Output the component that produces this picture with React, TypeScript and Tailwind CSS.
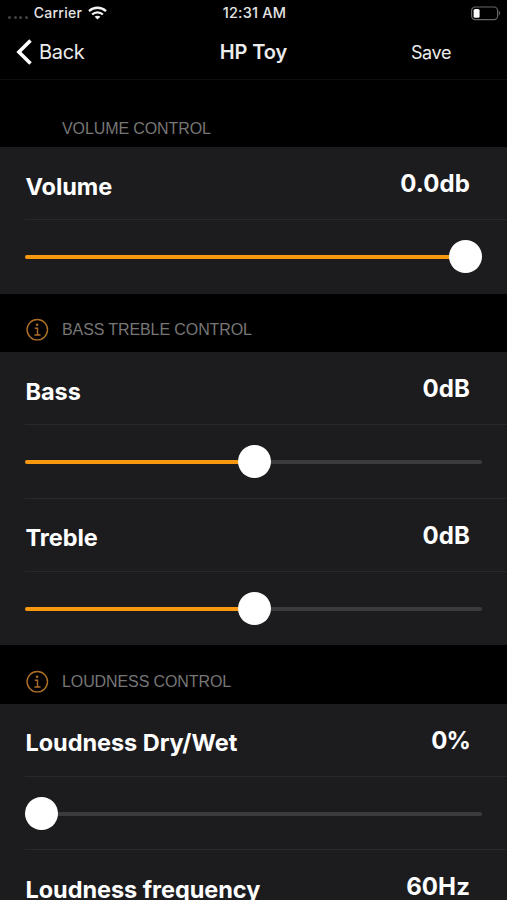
import clsx from 'clsx';

type Param = {
    label: string;
    value: string;
    position: number;
    valueClass?: string;
};

type Section = {
    title: string;
    info: boolean;
    params: Param[];
};

const SECTIONS: Section[] = [
    {
        title: 'Volume control',
        info: false,
        params: [{ label: 'Volume', value: '0.0db', position: 1 }],
    },
    {
        title: 'Bass treble control',
        info: true,
        params: [
            { label: 'Bass', value: '0dB', position: 0.502 },
            { label: 'Treble', value: '0dB', position: 0.502 },
        ],
    },
    {
        title: 'Loudness control',
        info: true,
        params: [
            { label: 'Loudness Dry/Wet', value: '0%', position: 0, valueClass: 'tracking-[-0.9px]' },
            { label: 'Loudness frequency', value: '60Hz', position: 0.2 },
        ],
    },
];

const TRACK_WIDTH = 457;
const THUMB_SIZE = 33;

function StatusBar() {
    return (
        <div className="grid h-[26px] shrink-0 grid-cols-3 items-center pl-2 pr-[6px] text-[14px] leading-none font-medium text-[#e4e4e4]">
            <div className="flex items-center">
                <div className="mt-[9px] flex gap-[2.6px]">
                    {[0, 1, 2, 3].map((dot) => (
                        <span key={dot} className="size-[3px] rounded-full bg-[#444]" />
                    ))}
                </div>
                <span className="ml-[6px] tracking-[0.25px]">Carrier</span>
                <svg className="ml-[6px]" width="19" height="14" viewBox="0 0 19 14" fill="none" stroke="#f2f2f2" strokeWidth="2.3">
                    <path d="M1 5.1C5.7.6 13.3.6 18 5.1" />
                    <path d="M4.1 8.5c3-2.9 7.8-2.9 10.8 0" />
                    <path d="M9.5 13.6 6.6 10.8c1.6-1.5 4.2-1.5 5.8 0z" fill="#f2f2f2" stroke="none" />
                </svg>
            </div>
            <div className="text-center text-[14.5px] tracking-[0.2px] whitespace-nowrap">12:31 AM</div>
            <svg className="justify-self-end" width="31" height="15" viewBox="0 0 31 15" fill="none">
                <rect x="1.6" y="1" width="26" height="12.6" rx="3.6" stroke="#666" strokeWidth="1.2" />
                <rect x="3.6" y="3" width="6" height="8.8" rx="1.6" fill="#fff" />
                <path d="M28.9 5.1c1.5.5 1.5 3.9 0 4.4z" fill="#666" />
            </svg>
        </div>
    );
}

function NavBar() {
    return (
        <header className="grid h-[54px] shrink-0 grid-cols-3 items-center border-b border-[#0e0e0e] pl-4 text-[20px] text-[#ececec]">
            <button className="flex items-center">
                <svg className="-mt-px" width="17" height="28" viewBox="0 0 17 28" fill="none" stroke="#fff" strokeWidth="3.6">
                    <path d="M14.5 2.4 2.9 14l11.6 11.6" />
                </svg>
                <span className="-mt-px ml-[6px] tracking-[-0.3px]">Back</span>
            </button>
            <h1 className="-mt-px -ml-4 text-center font-semibold tracking-[-0.1px]">HP Toy</h1>
            <button className="pr-[56px] text-right text-[18px] tracking-[-0.4px]">Save</button>
        </header>
    );
}

function InfoIcon() {
    return (
        <svg width="24" height="24" viewBox="0 0 24 24" fill="none" stroke="#ad6f27" strokeWidth="1.4">
            <circle cx="12.3" cy="11.7" r="10.2" />
            <circle cx="12.1" cy="6.7" r="1.3" fill="#ad6f27" stroke="none" />
            <path d="M9.8 10.2h2.7v6.7M9.5 17h6" />
        </svg>
    );
}

function SectionHeader({ title, info, first }: { title: string; info: boolean; first: boolean }) {
    return (
        <div className={clsx('flex shrink-0 items-end pl-[25px]', first ? 'h-[67px] pb-[6px]' : 'h-[58.4px] pb-[10px]')}>
            <div className="h-6 w-[37px]">{info && <InfoIcon />}</div>
            <h2 className="font-['Liberation_Sans',Arial,sans-serif] text-[16px] leading-6 tracking-[-0.1px] text-[#767676] uppercase">
                {title}
            </h2>
        </div>
    );
}

function Slider({ position }: { position: number }) {
    const thumbLeft = position * (TRACK_WIDTH - THUMB_SIZE);

    return (
        <div className="relative flex h-[33px] w-[457px] items-center">
            <div className="mt-px h-1 w-full overflow-hidden rounded-full bg-[#3b3b3d]">
                <div className="h-full bg-[#f7980f]" style={{ width: thumbLeft + THUMB_SIZE / 2 }} />
            </div>
            <div className="absolute top-0 size-[33px] rounded-full bg-white" style={{ left: thumbLeft }} />
        </div>
    );
}

function ParamRows({ label, value, position, valueClass, last }: Param & { last: boolean }) {
    return (
        <>
            <div className="flex h-[73.3px] shrink-0 flex-col pl-[25px]">
                <div className="flex grow justify-between pr-[37px] pl-[0.5px] leading-[30px] font-bold text-white">
                    <span className="pt-[24.6px] text-[23.5px] tracking-[-0.05px]">{label}</span>
                    <span className={clsx('pt-[22px] text-[24px]', valueClass ?? 'tracking-[0.1px]')}>{value}</span>
                </div>
                <div className="h-px bg-[#29292b]" />
            </div>
            <div className="flex h-[73.3px] shrink-0 flex-col pl-[25px]">
                <div className="grow pt-[20px]">
                    <Slider position={position} />
                </div>
                {!last && <div className="h-px bg-[#29292b]" />}
            </div>
        </>
    );
}

export default function App() {
    return (
        <div className="flex h-[900px] w-[507px] flex-col overflow-hidden bg-black font-['Inter',sans-serif]">
            <StatusBar />
            <NavBar />
            <main className="flex min-h-0 grow flex-col overflow-hidden">
                {SECTIONS.map((section, i) => (
                    <section key={section.title} className="shrink-0">
                        <SectionHeader title={section.title} info={section.info} first={i === 0} />
                        <div className="flex flex-col bg-[#1c1c1e]">
                            {section.params.map((param, j) => (
                                <ParamRows key={param.label} {...param} last={j === section.params.length - 1} />
                            ))}
                        </div>
                    </section>
                ))}
            </main>
        </div>
    );
}
